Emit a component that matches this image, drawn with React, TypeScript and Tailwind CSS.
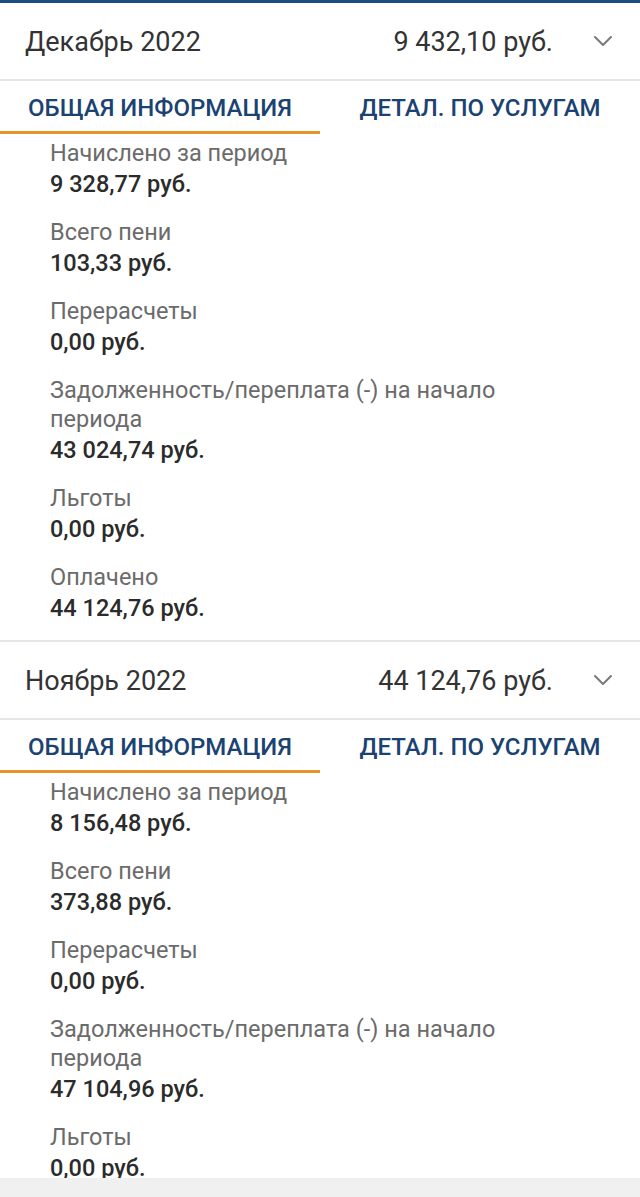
import React from "react";

type Item = { label: string; value: string };

const Chevron = () => (
  <svg width="20" height="14" viewBox="0 0 20 14" fill="none" className="text-[#7a7a7a]">
    <path d="M2 3 L10 11 L18 3" stroke="currentColor" strokeWidth="2" strokeLinecap="round" strokeLinejoin="round" />
  </svg>
);

function Section({ month, total, items }: { month: string; total: string; items: Item[] }) {
  return (
    <div className="border-b-[2px] border-[#e6e6e6]">
      <div className="flex items-center h-[78px] pl-[25px] pr-[27px] border-b-[2px] border-[#e6e6e6]">
        <div className="flex-1 text-[27px] text-[#333333] pt-[3px]">{month}</div>
        <div className="text-[27px] text-[#333333] pt-[3px]">{total}</div>
        <div className="ml-[40px] flex items-center">
          <Chevron />
        </div>
      </div>
      <div className="flex h-[53px]">
        <div className="w-1/2 flex items-center justify-center border-b-[3px] border-[#e8922e] text-[24px] font-medium text-[#1b4372] pt-[3px]">
          ОБЩАЯ ИНФОРМАЦИЯ
        </div>
        <div className="w-1/2 flex items-center justify-center border-b-[3px] border-transparent text-[24px] font-medium text-[#1b4372] pt-[3px]">
          ДЕТАЛ. ПО УСЛУГАМ
        </div>
      </div>
      <div className="pl-[50px] pr-[20px] pt-[5px] pb-[16px] flex flex-col gap-[18px]">
        {items.map((it) => (
          <div key={it.label}>
            <div className="text-[23.5px] leading-[29px] text-[#6b6b6b] w-[530px]">{it.label}</div>
            <div className="text-[23.5px] leading-[32px] font-medium text-[#2b2b2b]">{it.value}</div>
          </div>
        ))}
      </div>
    </div>
  );
}

export default function App() {
  const dec: Item[] = [
    { label: "Начислено за период", value: "9 328,77 руб." },
    { label: "Всего пени", value: "103,33 руб." },
    { label: "Перерасчеты", value: "0,00 руб." },
    { label: "Задолженность/переплата (-) на начало периода", value: "43 024,74 руб." },
    { label: "Льготы", value: "0,00 руб." },
    { label: "Оплачено", value: "44 124,76 руб." },
  ];
  const nov: Item[] = [
    { label: "Начислено за период", value: "8 156,48 руб." },
    { label: "Всего пени", value: "373,88 руб." },
    { label: "Перерасчеты", value: "0,00 руб." },
    { label: "Задолженность/переплата (-) на начало периода", value: "47 104,96 руб." },
    { label: "Льготы", value: "0,00 руб." },
    { label: "Оплачено", value: "44 124,76 руб." },
  ];
  return (
    <div className="w-[640px] h-[1197px] flex flex-col bg-white overflow-hidden" style={{ fontFamily: "Roboto, 'Noto Sans', sans-serif" }}>
      <div className="h-[3px] bg-[#1d4c86] shrink-0" />
      <div className="flex-1 overflow-hidden">
        <Section month="Декабрь 2022" total="9 432,10 руб." items={dec} />
        <Section month="Ноябрь 2022" total="44 124,76 руб." items={nov} />
      </div>
      <div className="h-[19px] bg-[#f0f0f0] shrink-0" />
    </div>
  );
}
